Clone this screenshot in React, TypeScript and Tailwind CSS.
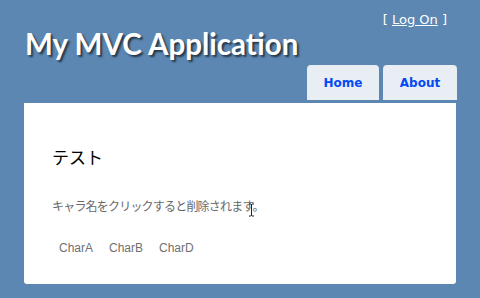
export default function App() {
  const chars = ['CharA', 'CharB', 'CharD'];

  return (
    <div className="min-h-screen bg-[#5c87b2] px-6 font-['Liberation_Sans',sans-serif]">
      <header>
        <div className="flex justify-end pt-[12px] pr-[9px] text-[13px] leading-[16px] text-white font-['DejaVu_Sans',sans-serif]">
          <span>
            [ <a href="#" className="underline">Log On</a> ]
          </span>
        </div>
        <h1 className="pl-[1px] text-[29.5px] leading-[32px] font-bold text-white font-['Lato','DejaVu_Sans',sans-serif] [text-shadow:2px_2px_2px_rgba(0,0,0,0.6)]">
          My MVC Application
        </h1>
        <nav className="mt-[5px] mb-[3px] flex justify-end gap-1 -mr-[1px]">
          <a
            href="#"
            className="flex h-[35px] w-[72px] items-center justify-center rounded-t-[4px] bg-[#e8eef4] text-[12px] font-bold text-[#034af3] font-['DejaVu_Sans',sans-serif]"
          >
            Home
          </a>
          <a
            href="#"
            className="flex h-[35px] w-[74px] items-center justify-center rounded-t-[4px] bg-[#e8eef4] text-[12px] font-bold text-[#034af3] font-['DejaVu_Sans',sans-serif]"
          >
            About
          </a>
        </nav>
      </header>

      <main className="relative h-[181px] rounded-b-[3px] bg-white px-7 pt-[45px]">
        <h2 className="text-[17px] leading-[17px] text-black font-['Noto_Sans_CJK_JP',sans-serif]">テスト</h2>
        <p className="mt-[35px] text-[12px] leading-[12px] tracking-[-0.8px] text-[#696969] font-['Noto_Sans_CJK_JP',sans-serif]">
          キャラ名をクリックすると削除されます。
        </p>
        <ul className="mt-[23px] flex pl-[7px]">
          {chars.map((c) => (
            <li key={c} className="w-[50px]">
              <a href="#" className="text-[12px] leading-[14px] text-[#707070]">
                {c}
              </a>
            </li>
          ))}
        </ul>
        {/* text cursor left on the page */}
        <svg className="absolute left-[224px] top-[100px]" width="7" height="14" viewBox="0 0 7 14">
          <path d="M1 1h2M1 13h2M4 1h2M4 13h2M3.5 1v12" stroke="#222" strokeWidth="1" fill="none" />
        </svg>
      </main>
    </div>
  );
}
